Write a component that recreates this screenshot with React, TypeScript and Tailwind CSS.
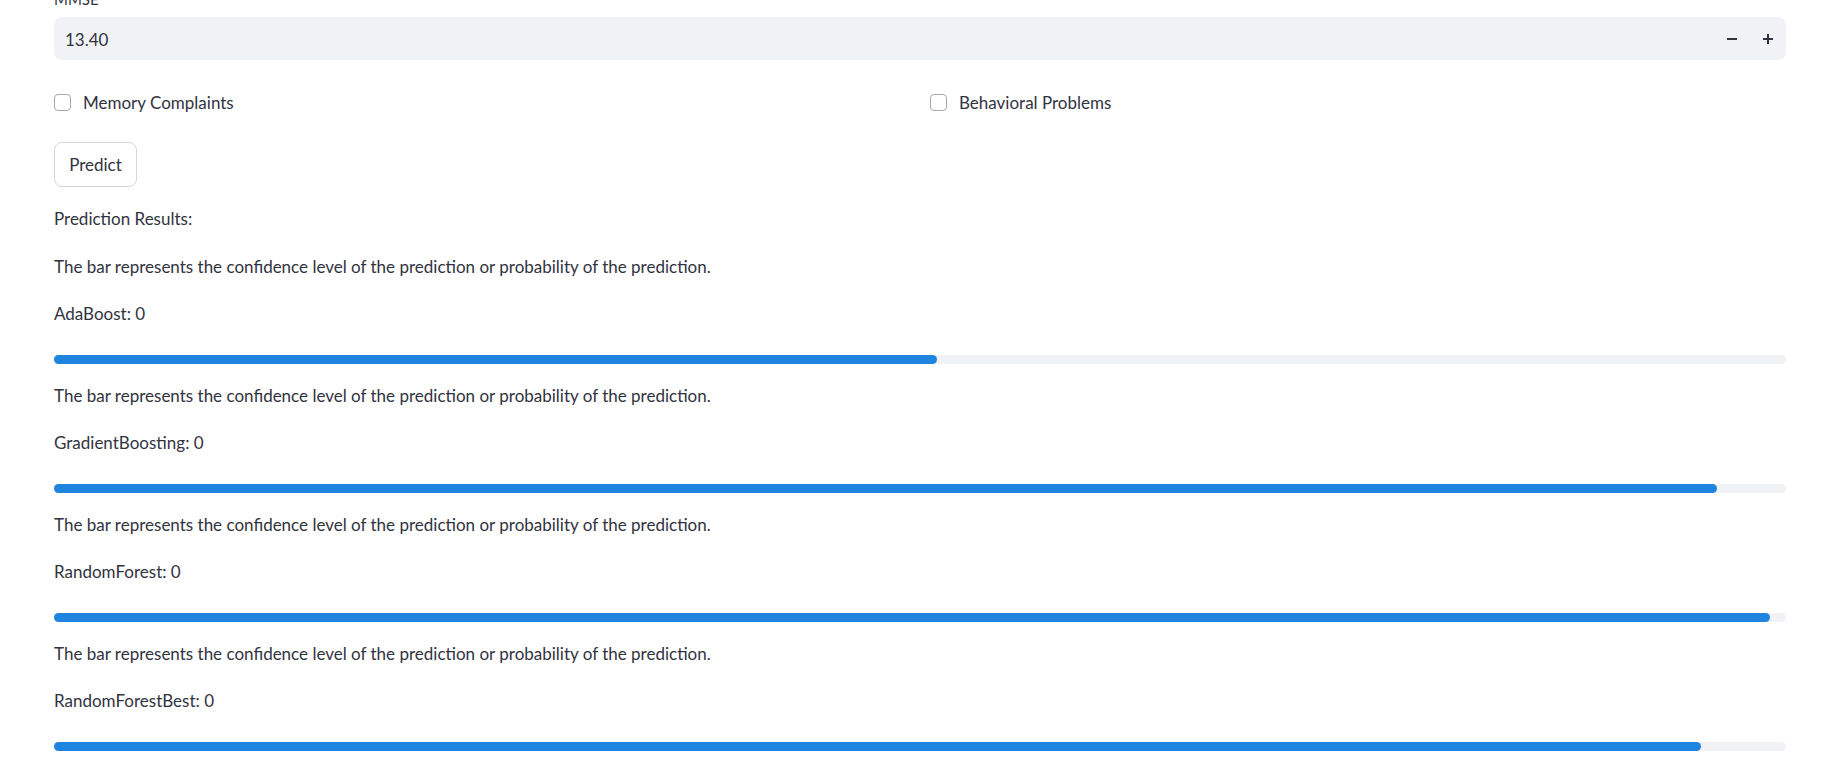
import { useState } from 'react'

const FONT = { fontFamily: '"Source Sans Pro", Lato, "Noto Sans", sans-serif' }

const results = [
  { name: 'AdaBoost', value: 0, conf: 0.51 },
  { name: 'GradientBoosting', value: 0, conf: 0.96 },
  { name: 'RandomForest', value: 0, conf: 0.991 },
  { name: 'RandomForestBest', value: 0, conf: 0.951 },
]

function Checkbox({ label }: { label: string }) {
  const [on, setOn] = useState(false)
  return (
    <label className="flex items-center gap-3 h-[26px] cursor-pointer select-none" onClick={() => setOn(v => !v)}>
      <span className={`w-[17px] h-[17px] rounded-[4px] border ${on ? 'bg-[#ff4b4b] border-[#ff4b4b]' : 'border-[#a7a8ae] bg-white'}`} />
      <span className="pt-[2px]">{label}</span>
    </label>
  )
}

export default function App() {
  const [mmse, setMmse] = useState(13.4)

  return (
    <div className="min-h-screen bg-white text-[#31333f] text-[17px] px-[54px] overflow-hidden" style={FONT}>
      {/* number input, label scrolled partly out of view */}
      <div className="-mt-[13px] h-[24px] flex items-end text-[15px] leading-[24px]">MMSE</div>
      <div className="mt-[6px] h-[43px] rounded-lg bg-[#f0f2f6] flex items-center">
        <div className="flex-1 pl-[11px] pt-[2px]">{mmse.toFixed(2)}</div>
        <button type="button" onClick={() => setMmse(v => v - 0.01)} className="w-9 h-full flex items-center justify-center">
          <svg width="10" height="10" viewBox="0 0 10 10"><path d="M0 5h10" stroke="#31333f" strokeWidth="2" /></svg>
        </button>
        <button type="button" onClick={() => setMmse(v => v + 0.01)} className="w-9 h-full flex items-center justify-center">
          <svg width="10" height="10" viewBox="0 0 10 10"><path d="M0 5h10M5 0v10" stroke="#31333f" strokeWidth="2" /></svg>
        </button>
      </div>

      <div className="mt-[29px] grid grid-cols-2 gap-5">
        <Checkbox label="Memory Complaints" />
        <Checkbox label="Behavioral Problems" />
      </div>

      <button type="button" className="mt-[27px] w-[83px] h-[45px] rounded-lg border border-[#d6d6d9] bg-white flex items-center justify-center">
        Predict
      </button>

      <div className="mt-[18px] h-[26px] leading-[28px]">Prediction Results:</div>

      {results.map(r => (
        <div key={r.name}>
          <div className="mt-[22px] h-[26px] leading-[28px]">
            The bar represents the confidence level of the prediction or probability of the prediction.
          </div>
          <div className="mt-[21px] h-[26px] leading-[28px]">{r.name}: {r.value}</div>
          <div className="mt-[29px] h-[9px] rounded-full bg-[#f0f2f6] mb-[-4px]">
            <div className="h-full rounded-full bg-[#1f84e0]" style={{ width: `${r.conf * 100}%` }} />
          </div>
        </div>
      ))}
    </div>
  )
}
